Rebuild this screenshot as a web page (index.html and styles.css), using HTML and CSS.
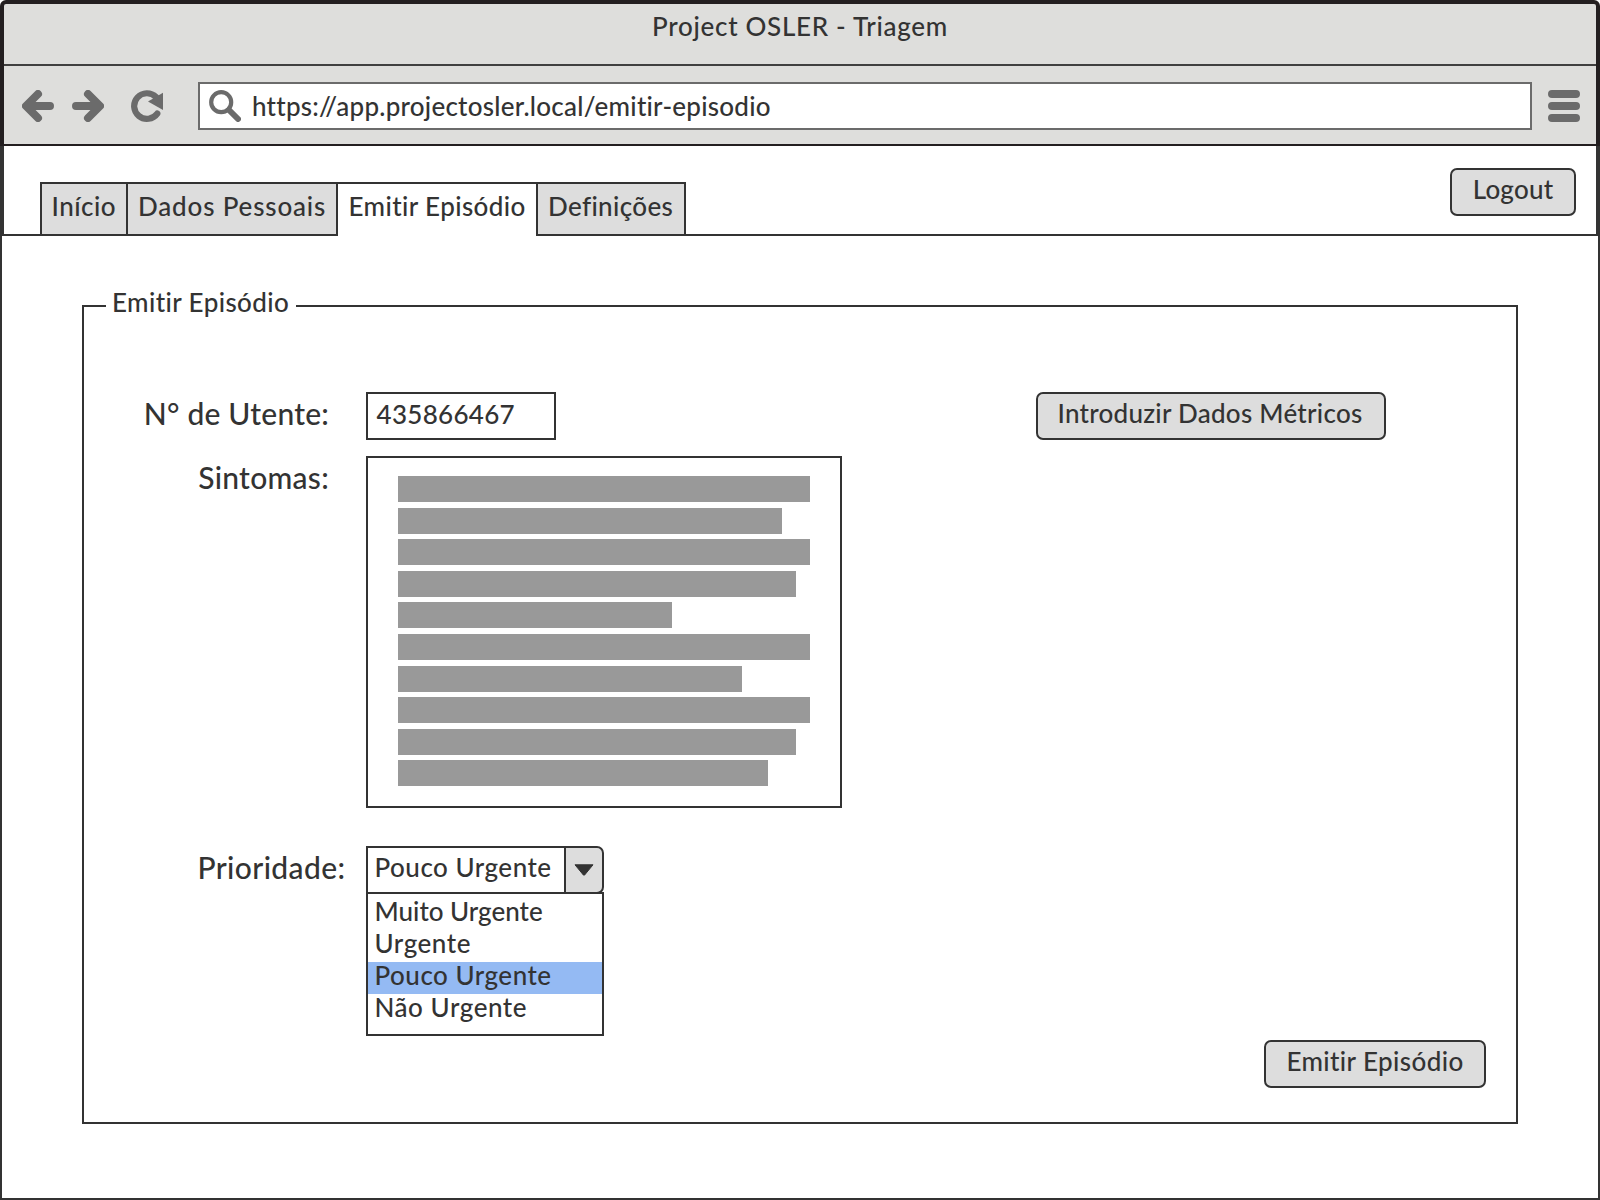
FILE: index.html
```
<!DOCTYPE html>
<html lang="pt">
<head>
<meta charset="utf-8">
<title>Project OSLER - Triagem</title>
<link rel="stylesheet" href="styles.css">
</head>
<body>
<header class="browser">
  <div class="titlebar"><span class="window-title">Project OSLER - Triagem</span></div>
  <div class="toolbar">
    <svg class="icon back" viewBox="0 0 32 32"><path d="M28 16H6M16 4L4 16L16 28"/></svg>
    <svg class="icon forward" viewBox="0 0 32 32"><path d="M4 16H26M16 4L28 16L16 28"/></svg>
    <svg class="icon reload" viewBox="0 0 32 32"><path class="arc" d="M25 7A12.8 12.8 0 1 0 26.3 23.6"/><path class="head" d="M32 2.8V20L17 11.6Z"/></svg>
    <div class="address">
      <svg class="icon" viewBox="0 0 32 32"><circle class="lens" cx="12.2" cy="12.2" r="10"/><path class="handle" d="M20 20L29 29"/></svg>
      <span class="url">https://app.projectosler.local/emitir-episodio</span>
    </div>
    <svg class="icon" viewBox="0 0 32 32"><path d="M4 4H28M4 16H28M4 28H28"/></svg>
  </div>
</header>
<nav class="nav">
  <div class="tabs">
    <a class="tab tab-home">Início</a>
    <a class="tab tab-personal">Dados Pessoais</a>
    <a class="tab tab-episode active">Emitir Episódio</a>
    <a class="tab tab-settings">Definições</a>
  </div>
  <button class="button logout">Logout</button>
</nav>
<main class="page">
  <fieldset class="panel">
    <legend class="legend">Emitir Episódio</legend>
    <div class="form">
      <label class="label label-patient">N° de Utente:</label>
      <div class="patient">
        <div class="input">435866467</div>
        <button class="button metrics">Introduzir Dados Métricos</button>
      </div>
      <label class="label label-symptoms">Sintomas:</label>
      <div class="textarea">
        <i class="line" style="width:412px"></i>
        <i class="line" style="width:384px"></i>
        <i class="line" style="width:412px"></i>
        <i class="line" style="width:398px"></i>
        <i class="line" style="width:274px"></i>
        <i class="line" style="width:412px"></i>
        <i class="line" style="width:344px"></i>
        <i class="line" style="width:412px"></i>
        <i class="line" style="width:398px"></i>
        <i class="line" style="width:370px"></i>
      </div>
      <label class="label label-priority">Prioridade:</label>
      <div class="combo">
        <div class="select">
          <span class="value">Pouco Urgente</span>
          <span class="toggle"><svg class="caret" viewBox="0 0 20 12"><path d="M1 .8H19L10.6 11Q10 11.6 9.4 11Z"/></svg></span>
        </div>
        <ul class="options">
          <li class="option very">Muito Urgente</li>
          <li class="option urgent">Urgente</li>
          <li class="option selected">Pouco Urgente</li>
          <li class="option not">Não Urgente</li>
        </ul>
      </div>
    </div>
    <div class="actions"><button class="button submit">Emitir Episódio</button></div>
  </fieldset>
</main>
</body>
</html>
```
FILE: styles.css
```
* { box-sizing: border-box; }

body {
  margin: 0;
  width: 1600px;
  height: 1200px;
  display: flex;
  flex-direction: column;
  overflow: hidden;
  background: #fff;
  color: #333;
  font: 500 26px/32px Lato, "Open Sans", sans-serif;
  white-space: nowrap;
}

/* Browser chrome */
.browser {
  height: 146px;
  border: 4px solid #231f20;
  border-bottom-width: 2px;
  border-radius: 6px 6px 0 0;
  background: #dededc;
}
.titlebar {
  height: 62px;
  padding-top: 6px;
  border-bottom: 2px solid #404040;
  text-align: center;
}
.window-title { letter-spacing: .7px; }
.toolbar {
  height: 78px;
  display: flex;
  align-items: center;
  padding: 2px 16px 0 18px;
}
.icon {
  flex: none;
  display: block;
  width: 32px;
  height: 32px;
  fill: none;
  stroke: #6b6b6b;
  stroke-width: 8;
  stroke-linecap: round;
  stroke-linejoin: round;
}
.back { margin-right: 18px; }
.forward { margin-right: 27px; }
.reload { margin-right: 35px; }
.arc { stroke-width: 6.2; }
.head { fill: #6b6b6b; stroke: none; }
.lens { stroke-width: 4.2; }
.handle { stroke-width: 6; }
.address {
  flex: 1;
  height: 48px;
  display: flex;
  align-items: center;
  gap: 11px;
  margin-right: 16px;
  padding-left: 9px;
  border: 2px solid #6b6b6b;
  background: #fff;
}
.url { letter-spacing: .24px; }

/* Tabs */
.nav {
  height: 90px;
  display: flex;
  justify-content: space-between;
  padding: 0 20px 0 36px;
  border: solid #333;
  border-width: 0 4px 2px;
}
.tabs { display: flex; padding-top: 36px; }
.tab {
  height: 54px;
  padding-top: 6px;
  border: solid #333;
  border-width: 2px 0 2px 2px;
  background: #ddd;
}
.tab.active { border-bottom: 0; background: #fff; }
.tab-home { width: 86px; padding-left: 9.5px; letter-spacing: .5px; }
.tab-personal { width: 210px; padding-left: 10px; letter-spacing: .83px; }
.tab-episode { width: 200px; padding-left: 10.5px; letter-spacing: .4px; }
.tab-settings { width: 150px; padding-left: 10px; letter-spacing: .35px; border-right-width: 2px; }

.button {
  height: 48px;
  padding: 0 0 6px;
  border: 2px solid #333;
  border-radius: 7px;
  background: #ddd;
  color: inherit;
  font: inherit;
}
.logout { width: 126px; margin-top: 22px; letter-spacing: .21px; }

/* Form panel */
.page {
  flex: 1;
  padding: 50px 80px 0;
  border: solid #333;
  border-width: 0 2px 2px;
}
.panel {
  height: 838px;
  margin: 0;
  padding: 0 30px 0 0;
  border: 2px solid #333;
}
.legend {
  margin-left: 22px;
  width: 190px;
  padding: 0 0 8px 6px;
  letter-spacing: .4px;
}
.form {
  display: grid;
  grid-template-columns: 246px 1fr;
  grid-template-rows: 48px 352px 212px;
  column-gap: 36px;
  row-gap: 16px;
  padding-top: 66px;
}
.label {
  justify-self: end;
  padding-top: 3px;
  font-size: 30px;
  line-height: 36px;
}
.label-patient { margin-right: 1px; letter-spacing: .2px; }
.label-symptoms { margin-right: 1px; letter-spacing: .28px; }
.label-priority { margin: 22px -15.5px 0 0; letter-spacing: .4px; }
.patient { display: flex; justify-content: space-between; width: 1020px; }
.input {
  width: 190px;
  padding: 4px 0 0 8.5px;
  border: 2px solid #333;
  letter-spacing: .3px;
}
.metrics { width: 350px; padding-right: 2px; letter-spacing: .27px; }
.textarea {
  width: 476px;
  display: flex;
  flex-direction: column;
  gap: 5.6px;
  padding: 18px 30px;
  border: 2px solid #333;
}
.line { height: 26px; background: #999; }
.combo { width: 238px; margin-top: 22px; }
.select { height: 48px; display: flex; }
.value {
  flex: 1;
  padding: 3px 0 0 6.5px;
  border: 2px solid #333;
  border-right: 0;
  letter-spacing: .5px;
}
.toggle {
  width: 40px;
  display: flex;
  align-items: center;
  justify-content: center;
  border: 2px solid #333;
  border-radius: 0 7px 7px 0;
  background: #ddd;
}
.caret { width: 20px; height: 12px; fill: #333; stroke: #333; stroke-width: 1; stroke-linejoin: round; }
.options {
  height: 144px;
  margin: -2px 0 0;
  padding: 4px 0 0;
  border: 2px solid #333;
  list-style: none;
}
.option { height: 32px; padding-left: 6.5px; line-height: 26px; letter-spacing: .5px; }
.very { letter-spacing: 0; }
.urgent { letter-spacing: .55px; }
.not { letter-spacing: .55px; }
.selected { background: #94baf3; }
.actions { display: flex; justify-content: flex-end; padding-top: 4px; }
.submit { width: 222px; letter-spacing: .4px; }
```
